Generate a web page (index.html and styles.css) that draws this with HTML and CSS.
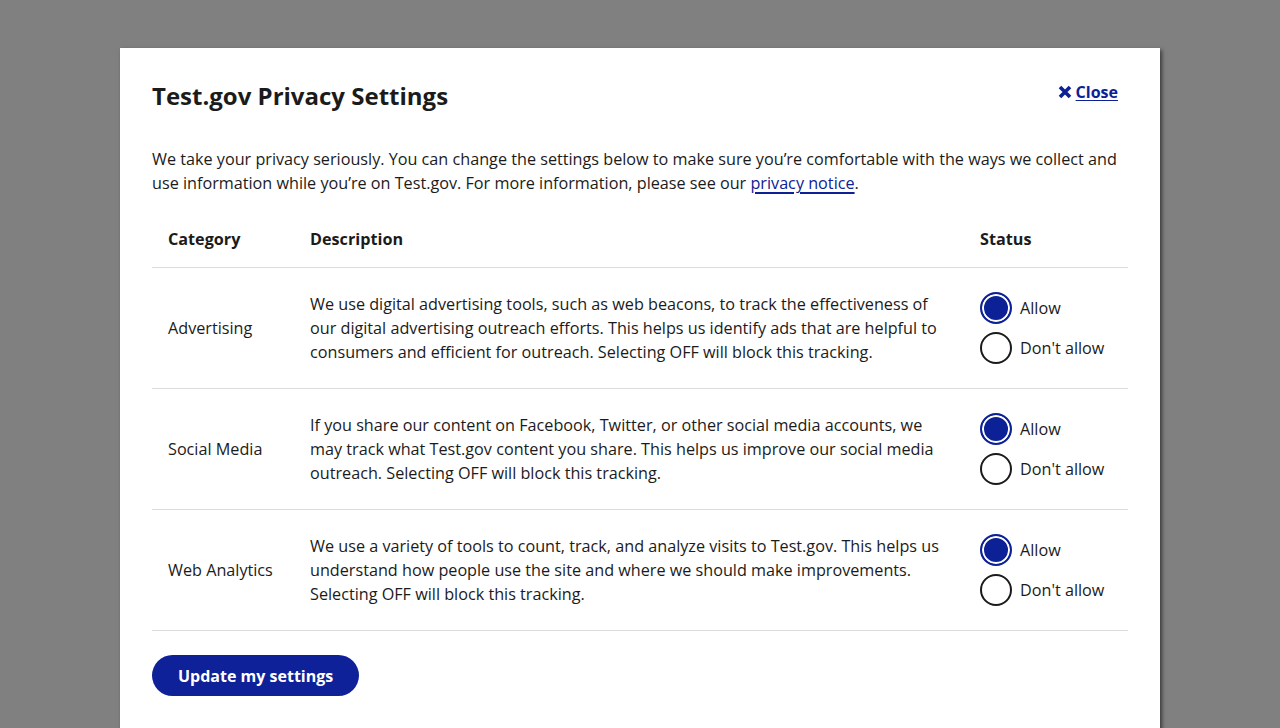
FILE: index.html
```html
<!DOCTYPE html>
<html lang="en">
<head>
<meta charset="utf-8">
<title>Test.gov Privacy Settings</title>
<link rel="stylesheet" href="styles.css">
</head>
<body>
<div class="overlay">
  <div class="modal" role="dialog" aria-labelledby="title">
    <a class="close" href="#">
      <svg class="close-icon" viewBox="0 0 14 14" width="14" height="14" aria-hidden="true"><path d="M2 2 L12 12 M12 2 L2 12" stroke="currentColor" stroke-width="3.6" stroke-linecap="butt"/></svg>
      <span>Close</span>
    </a>
    <h2 class="title" id="title">Test.gov Privacy Settings</h2>
    <p class="intro">We take your privacy seriously. You can change the settings below to make sure you’re comfortable with the ways we collect and use information while you’re on Test.gov. For more information, please see our <a href="#" class="link">privacy notice</a>.</p>
    <table class="settings">
      <colgroup><col class="c1"><col class="c2"><col class="c3"></colgroup>
      <thead>
        <tr><th>Category</th><th>Description</th><th>Status</th></tr>
      </thead>
      <tbody>
        <tr>
          <td>Advertising</td>
          <td>We use digital advertising tools, such as web beacons, to track the effectiveness of our digital advertising outreach efforts. This helps us identify ads that are helpful to consumers and efficient for outreach. Selecting OFF will block this tracking.</td>
          <td>
            <div class="radios">
              <label class="radio"><input type="radio" name="ad" checked><span>Allow</span></label>
              <label class="radio"><input type="radio" name="ad"><span>Don't allow</span></label>
            </div>
          </td>
        </tr>
        <tr>
          <td>Social Media</td>
          <td>If you share our content on Facebook, Twitter, or other social media accounts, we may track what Test.gov content you share. This helps us improve our social media outreach. Selecting OFF will block this tracking.</td>
          <td>
            <div class="radios">
              <label class="radio"><input type="radio" name="sm" checked><span>Allow</span></label>
              <label class="radio"><input type="radio" name="sm"><span>Don't allow</span></label>
            </div>
          </td>
        </tr>
        <tr>
          <td>Web Analytics</td>
          <td>We use a variety of tools to count, track, and analyze visits to Test.gov. This helps us understand how people use the site and where we should make improvements. Selecting OFF will block this tracking.</td>
          <td>
            <div class="radios">
              <label class="radio"><input type="radio" name="wa" checked><span>Allow</span></label>
              <label class="radio"><input type="radio" name="wa"><span>Don't allow</span></label>
            </div>
          </td>
        </tr>
      </tbody>
    </table>
    <button class="btn" type="button">Update my settings</button>
  </div>
</div>
</body>
</html>
```

FILE: styles.css
```css
html, body {
  margin: 0;
  padding: 0;
  height: 100%;
  overflow: hidden;
}
body {
  font-family: "Open Sans", "Liberation Sans", sans-serif;
  color: #1b1b1b;
  font-size: 16.2px;
  line-height: 1.5;
  background: #808080;
}
.overlay {
  padding-top: 48px;
  display: flex;
  justify-content: center;
}
.modal {
  position: relative;
  width: 1040px;
  box-sizing: border-box;
  background: #fff;
  padding: 32px 32px 40px;
  box-shadow: 2px 2px 4px rgba(0, 0, 0, 0.55);
}
.close {
  position: absolute;
  top: 32px;
  right: 42px;
  display: flex;
  align-items: center;
  gap: 4px;
  color: #0d2196;
  font-size: 16px;
  line-height: 24px;
  font-weight: 700;
  text-decoration: underline;
  text-underline-offset: 2px;
}
.close-icon {
  display: block;
}
.title {
  margin: 0;
  font-size: 24px;
  line-height: 32px;
  font-weight: 700;
}
.intro {
  margin: 35px 0 16px;
}
.link {
  color: #0d2196;
  text-decoration: underline;
  text-decoration-thickness: 1.5px;
  text-underline-offset: 3px;
}
.settings {
  width: 976px;
  border-collapse: collapse;
  table-layout: fixed;
}
.c1 { width: 142px; }
.c2 { width: 670px; }
.c3 { width: 164px; }
.settings th {
  text-align: left;
  font-weight: 700;
  padding: 15px 16px 16px;
  border-bottom: 1px solid #dcdcdc;
}
.settings td {
  padding: 24px 16px 23px;
  border-bottom: 1px solid #dcdcdc;
  vertical-align: middle;
}
.radios {
  display: flex;
  flex-direction: column;
  gap: 8px;
}
.radio {
  display: flex;
  align-items: center;
  gap: 8px;
}
.radio input {
  appearance: none;
  -webkit-appearance: none;
  margin: 0;
  width: 32px;
  height: 32px;
  box-sizing: border-box;
  border-radius: 50%;
  border: 2px solid #1b1b1b;
  background: #fff;
}
.radio input:checked {
  border-color: #0d2196;
  background: #0d2196;
  box-shadow: inset 0 0 0 2px #fff;
}
.btn {
  margin-top: 24px;
  font-family: inherit;
  font-size: 16px;
  font-weight: 700;
  line-height: 24px;
  color: #fff;
  background: #0f2199;
  border: 0;
  border-radius: 21px;
  padding: 9px 26px 8px;
}
```
